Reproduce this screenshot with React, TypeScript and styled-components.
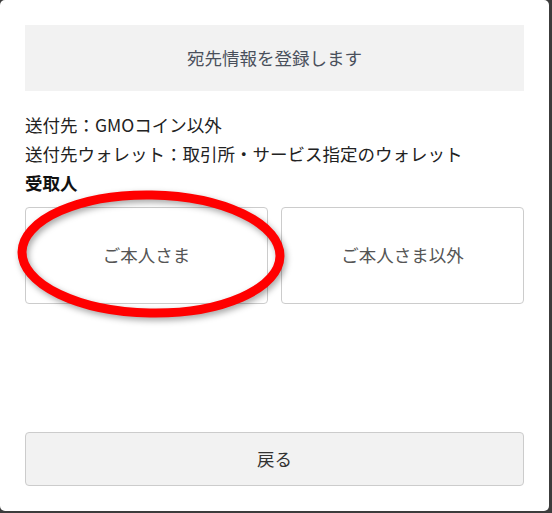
import styled, { createGlobalStyle } from 'styled-components';

const GlobalStyle = createGlobalStyle`
  html, body {
    margin: 0;
    padding: 0;
    background-color: #3c3c3c;
  }

  body {
    font-family: "Noto Sans CJK JP", "Noto Sans", sans-serif;
  }
`;

const Dialog = styled.div`
  position: relative;
  box-sizing: border-box;
  display: flex;
  flex-direction: column;
  width: 549px;
  height: 511px;
  padding: 25px;
  background-color: #ffffff;
  border-radius: 5px;
`;

const Title = styled.div`
  display: flex;
  align-items: center;
  justify-content: center;
  height: 66px;
  padding-bottom: 2px;
  box-sizing: border-box;
  background-color: #f2f2f2;
  color: #4a505c;
  font-size: 17.5px;
`;

const Info = styled.div`
  margin-top: 19px;
  color: #222222;
  font-size: 17.5px;
  line-height: 29px;
`;

const Label = styled.div`
  font-weight: bold;
  color: #111111;
`;

const Choices = styled.div`
  display: grid;
  grid-template-columns: 1fr 1fr;
  gap: 13px;
  margin-top: 10px;
`;

const Choice = styled.button`
  height: 97px;
  padding-bottom: 3px;
  border: 1px solid #cccccc;
  border-radius: 4px;
  background-color: #ffffff;
  color: #555555;
  font-family: inherit;
  font-size: 17.5px;
  cursor: pointer;
`;

const Spacer = styled.div`
  flex: 1;
`;

const BackButton = styled.button`
  height: 54px;
  padding-bottom: 3px;
  border: 1px solid #cccccc;
  border-radius: 4px;
  background-color: #f2f2f2;
  color: #333333;
  font-family: inherit;
  font-size: 17.5px;
  cursor: pointer;
`;

// hand-drawn red mark over the first choice
const Highlight = styled.svg`
  position: absolute;
  left: 10px;
  top: 184px;
  width: 282px;
  height: 144px;
  pointer-events: none;
  filter: drop-shadow(2px 3px 3px rgba(0, 0, 0, 0.35));
`;

function App() {
  return (
    <>
      <GlobalStyle />
      <Dialog>
        <Title>宛先情報を登録します</Title>

        <Info>
          <div>送付先：GMOコイン以外</div>
          <div>送付先ウォレット：取引所・サービス指定のウォレット</div>
          <Label>受取人</Label>
        </Info>

        <Choices>
          <Choice>ご本人さま</Choice>
          <Choice>ご本人さま以外</Choice>
        </Choices>

        <Spacer />

        <BackButton>戻る</BackButton>

        <Highlight viewBox="0 0 282 144">
          <ellipse
            cx="141"
            cy="70"
            rx="129"
            ry="59"
            fill="none"
            stroke="#ff0000"
            strokeWidth="9"
            transform="rotate(1 141 70)"
          />
        </Highlight>
      </Dialog>
    </>
  );
}

export default App;
